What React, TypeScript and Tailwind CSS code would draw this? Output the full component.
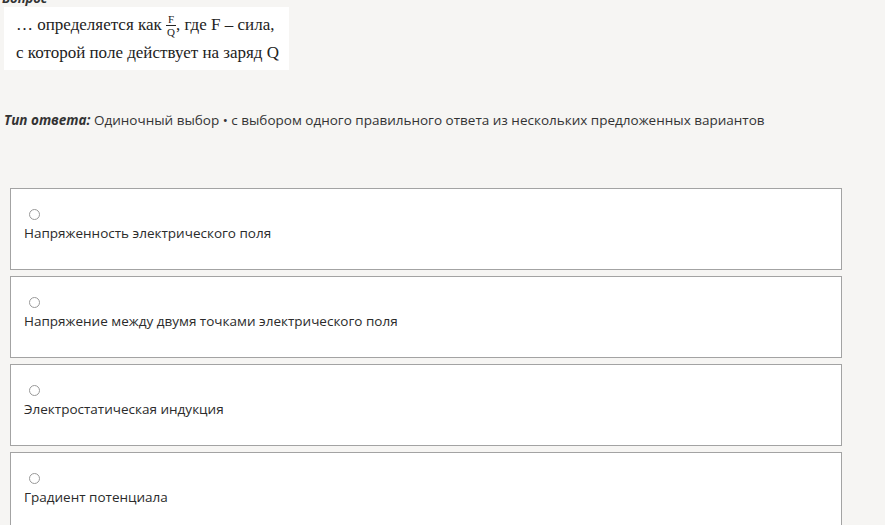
const options = [
  "Напряженность электрического поля",
  "Напряжение между двумя точками электрического поля",
  "Электростатическая индукция",
  "Градиент потенциала",
];

export default function App() {
  return (
    <div className="h-[525px] w-[885px] overflow-hidden bg-[#f6f5f3] font-['Open_Sans',sans-serif] text-[#333]">
      <div className="-mt-[10px] pl-[2px] text-[13px] font-bold italic leading-[16px]">Вопрос</div>
      <div className="mt-[1px] ml-[4px] w-[285px] bg-white pt-[4px] pb-[3px] pl-[12px] font-['Liberation_Serif',serif] text-[17px] leading-[28px] text-[#222]">
        <div className="flex h-[28px] items-center">
          <span>… определяется как&nbsp;</span>
          <span className="inline-flex flex-col items-center text-[11px] leading-[12px]">
            <span>F</span>
            <span className="border-t border-[#222] px-[1px]">Q</span>
          </span>
          <span>, где F – сила,</span>
        </div>
        <div>с которой поле действует на заряд Q</div>
      </div>
      <p className="mt-[41px] pl-[4px] text-[13.5px] leading-[18px]">
        <span className="font-bold italic">Тип ответа:</span> Одиночный выбор • с выбором одного правильного ответа из нескольких предложенных вариантов
      </p>
      <div className="mt-[59px] flex w-[842px] flex-col gap-[6px] pl-[10px]">
        {options.map((option) => (
          <label className="block h-[82px] border border-[#a3a3a3] bg-white pt-[20px] pl-[13px]" key={option}>
            <span className="ml-[5px] block h-[11px] w-[11px] rounded-full border border-[#999]" />
            <span className="mt-[4px] block text-[13.5px] leading-[18px] text-[#2b2b2b]">{option}</span>
          </label>
        ))}
      </div>
    </div>
  );
}
